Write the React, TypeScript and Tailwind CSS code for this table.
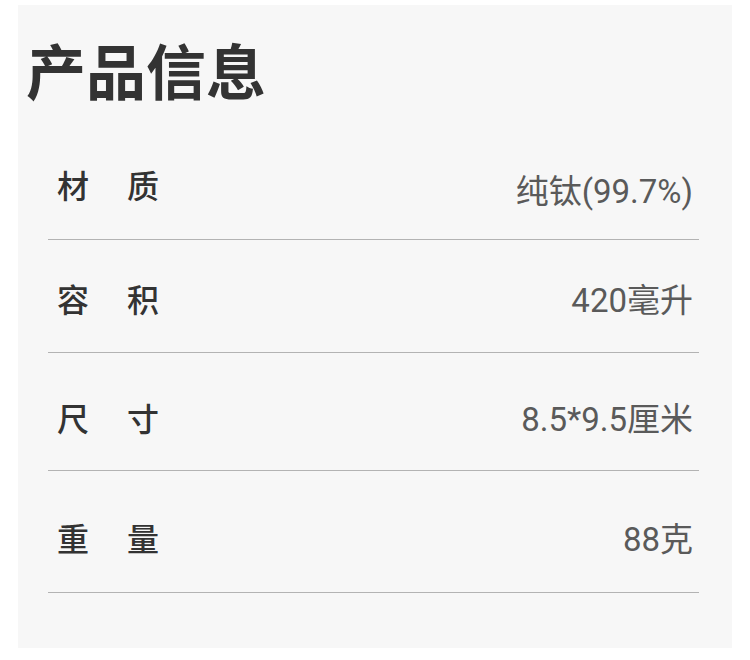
import React from "react";

const rows = [
  { a: "材", b: "质", v: "纯钛(99.7%)", pt: "pt-[0px]", pb: "pb-[31px]", vpt: "pt-[5px]" },
  { a: "容", b: "积", v: "420毫升", pt: "pt-[45px]", pb: "pb-[35px]", vpt: "pt-[0px]" },
  { a: "尺", b: "寸", v: "8.5*9.5厘米", pt: "pt-[51px]", pb: "pb-[34px]", vpt: "pt-[0px]" },
  { a: "重", b: "量", v: "88克", pt: "pt-[53px]", pb: "pb-[36px]", vpt: "pt-[0px]" },
];

export default function App() {
  return (
    <div
      className="w-[750px] h-[660px] bg-white pt-[5px]"
      style={{ fontFamily: 'Roboto, "Noto Sans CJK SC", sans-serif' }}
    >
      <div className="ml-[18px] w-[714px] h-[643px] bg-[#f7f7f7] pt-[40px]">
        <h1 className="pl-[8px] text-[60px] leading-[60px] font-bold text-[#333333]">
          产品信息
        </h1>
        <div className="ml-[30px] w-[651px] mt-[66px]">
          {rows.map((r, i) => (
            <div
              key={i}
              className={`flex justify-between items-start border-b border-[#b3b3b3] ${r.pt} ${r.pb}`}
            >
              <div className="pl-[9px] w-[111px] flex justify-between text-[32px] leading-[32px] font-medium text-[#333333]">
                <span>{r.a}</span>
                <span>{r.b}</span>
              </div>
              <div className={`pr-[6px] text-[33px] leading-[32px] text-[#5a5a5a] ${r.vpt}`}>
                {r.v}
              </div>
            </div>
          ))}
        </div>
      </div>
    </div>
  );
}
